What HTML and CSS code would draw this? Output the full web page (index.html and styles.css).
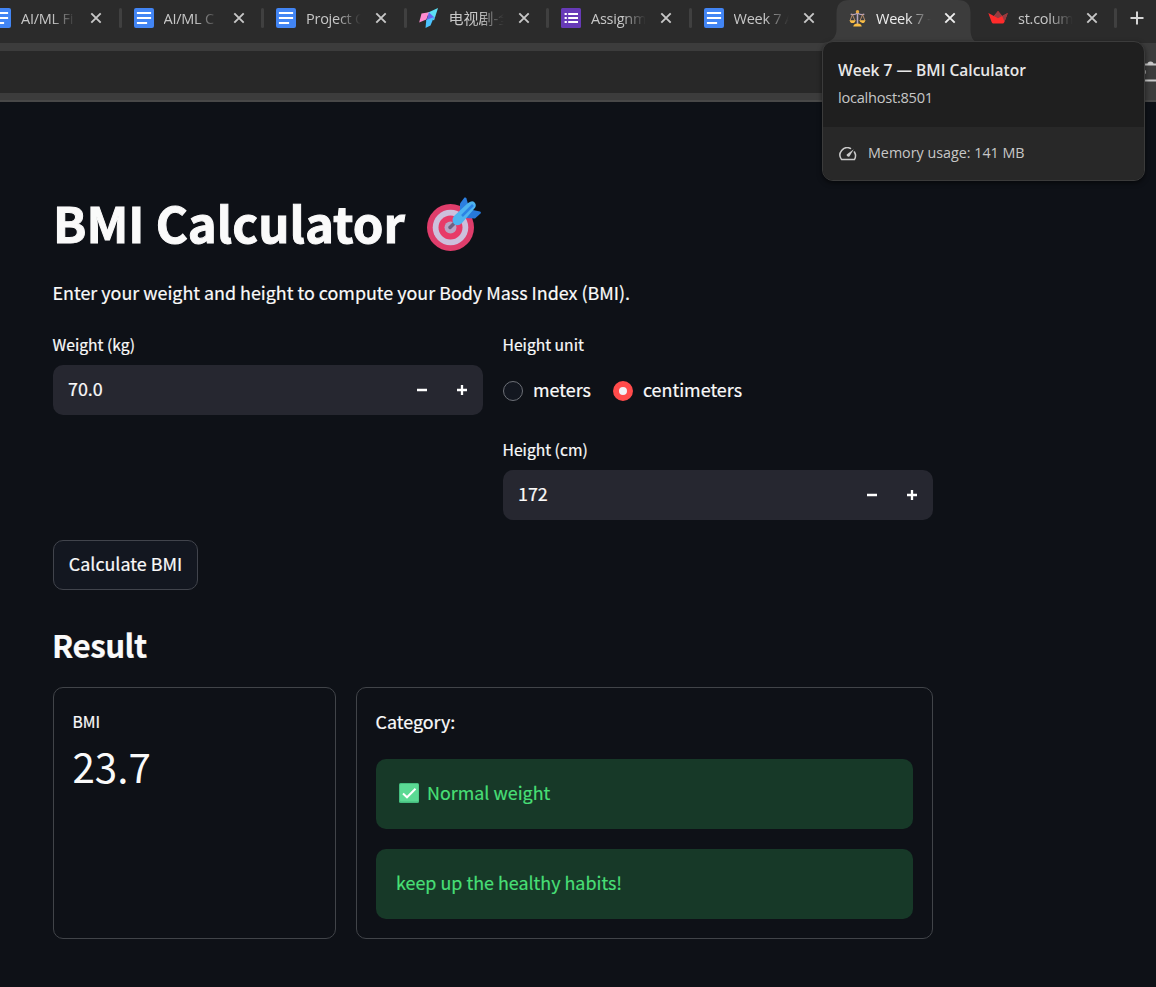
FILE: index.html
```
<!DOCTYPE html>
<html lang="en">
<head>
<meta charset="utf-8">
<title>Week 7 — BMI Calculator</title>
<link rel="stylesheet" href="styles.css">
</head>
<body>
<svg class="defs" width="0" height="0">
  <symbol id="doc" viewBox="0 0 20 20"><rect width="20" height="20" rx="2" fill="#4285f4"/><path d="M4 5h12M4 10h12M4 15h8" stroke="#fff" stroke-width="2.2" stroke-linecap="square"/></symbol>
  <symbol id="close" viewBox="0 0 12 12"><path d="M1.3 1.3l9.4 9.4M10.7 1.3L1.3 10.7" stroke="currentColor" stroke-width="1.9" fill="none"/></symbol>
</svg>
<header class="browser">
  <nav class="tabs">
    <div class="tab"><svg class="fav"><use href="#doc"/></svg><span class="title">AI/ML Fi</span><svg class="close"><use href="#close"/></svg></div>
    <div class="tab"><svg class="fav"><use href="#doc"/></svg><span class="title">AI/ML C</span><svg class="close"><use href="#close"/></svg></div>
    <div class="tab"><svg class="fav"><use href="#doc"/></svg><span class="title">Project C</span><svg class="close"><use href="#close"/></svg></div>
    <div class="tab"><svg class="fav" viewBox="0 0 20 20"><path d="M19 0L7 5.5l8 7z" fill="#5ce1f5"/><path d="M2.5 5.5L10 4.2l-2.7 7.3L.2 14.5z" fill="#ff8bd0"/><path d="M10 4.5l6 5.5-8.8 3z" fill="#6866ec"/><path d="M7.3 12L15 9l-3.5 8.5L6.5 20z" fill="#4cc4ff"/></svg><span class="title cjk">电视剧-全</span><svg class="close"><use href="#close"/></svg></div>
    <div class="tab"><svg class="fav" viewBox="0 0 20 20"><rect width="20" height="20" rx="1.5" fill="#673ab7"/><path d="M7.2 6H17M7.2 10H17M7.2 14H17M3.6 6h2.2M3.6 10h2.2M3.6 14h2.2" stroke="#fff" stroke-width="2.2"/></svg><span class="title">Assignm</span><svg class="close"><use href="#close"/></svg></div>
    <div class="tab nosep"><svg class="fav"><use href="#doc"/></svg><span class="title">Week 7 A</span><svg class="close"><use href="#close"/></svg></div>
    <div class="tab active nosep">
      <svg class="shape" viewBox="0 0 158 43"><path d="M0 43Q13.500 41 13.500 29V13Q13.500 0 26.500 0H134.500Q147.500 0 147.500 13V29Q147.500 43 158 43z" fill="#3c3c3c"/></svg>
      <svg class="fav scales" viewBox="0 0 20 20"><path d="M9.100 2h1.800v15H9.100z" fill="#b5a6bf"/><path d="M2 5.500Q6 7 10 4Q14 7 18 5.500" stroke="#b9a4bd" stroke-width="1.500" fill="none"/><path d="M4 6L1.300 13M4 6l3 7M16 6l-3 7M16 6l2.700 7" stroke="#ca9970" stroke-width="1"/><circle cx="10" cy="2.500" r="2" fill="#e5a640"/><path d="M.7 12.500h7.100Q7 16 4.200 16T.7 12.500zM12.200 12.500h7.100Q18.500 16 15.800 16t-3.600-3.500zM5 20Q5.500 16.500 10 16.500t5 3.500z" fill="#f9bd45"/></svg>
      <span class="title">Week 7 —</span><svg class="close"><use href="#close"/></svg></div>
    <div class="tab last"><svg class="fav" viewBox="0 0 20 20"><path d="M.3 5l5.600 3L10 3l4.200 5L19.800 5l-3.500 9.300q-.5 1.200-1.700 1.200H5.400q-1.200 0-1.700-1.200z" fill="#ff2b2b"/><path d="M10 3l4.200 5L10 10.200 5.900 8zM14.200 8l5.600-3-3.300 8.800z" fill="#943c41"/></svg><span class="title">st.colum</span><svg class="close"><use href="#close"/></svg></div>
    <svg class="new" viewBox="0 0 14 14"><path d="M7 .5v13M.5 7h13" stroke="#d5d5d5" stroke-width="2"/></svg>
  </nav>
  <div class="toolbar"><div class="address"></div><svg class="tool" viewBox="0 0 12 22"><path d="M0 3.500h12M0 19.500h12" stroke="#c7c7c7" stroke-width="2"/><path d="M3.500 3a3 2.500 0 016 0z" fill="#c7c7c7"/><path d="M0 8a4 4 0 010 6" fill="none" stroke="#c7c7c7"/></svg></div>
</header>
<aside class="hovercard">
  <div class="card-info"><div class="card-title">Week 7 — BMI Calculator</div><div class="card-url">localhost:8501</div></div>
  <div class="card-memory"><svg viewBox="0 0 18 14"><path d="M11.500 1.500A7.300 7.300 0 002.600 12.600h12.800A7.300 7.300 0 0015.400 5" fill="none" stroke="#c9c9c9" stroke-width="1.500" stroke-linecap="round" stroke-linejoin="round"/><path d="M14.800 2.300L10.400 9.400A1.800 1.800 0 017.700 7.400z" fill="#c9c9c9"/></svg><span>Memory usage: 141 MB</span></div>
</aside>
<main class="app">
  <h1><span>BMI Calculator</span><svg class="target" viewBox="0 0 54 54"><circle cx="23.500" cy="30.500" r="23.500" fill="#df3d6b"/><circle cx="23.500" cy="30.500" r="17.800" fill="#cdbfdc"/><circle cx="23.500" cy="30.500" r="12" fill="#e83a68"/><circle cx="23.500" cy="30.500" r="6" fill="#b9a4c4"/><path d="M23 30.500l6-6" stroke="#716080" stroke-width="3.500" stroke-linecap="round"/><path d="M33 15L33 6.500 37.500 .5Q39 0 39.500 1.500L42 11z" fill="#2c7fe0"/><path d="M41 12l12 2.500q1.500.5.500 2L48 21.500l-10-.5z" fill="#2778da"/><path d="M27 19L41 6q5-3.500 7 0 2 3-1 6L35 26q-4 4-8 1-3-4 0-8z" fill="#4eb4f0"/><path d="M35 19L46 8" stroke="#2c83e4" stroke-width="2.500"/></svg></h1>
  <p class="intro">Enter your weight and height to compute your Body Mass Index (BMI).</p>
  <section class="form">
    <div class="field"><label>Weight (kg)</label><div class="number"><span class="value">70.0</span><svg class="step" viewBox="0 0 10 10"><path d="M0 5h10" stroke="#fff" stroke-width="2.500"/></svg><svg class="step" viewBox="0 0 10 10"><path d="M0 5h10M5 0v10" stroke="#fff" stroke-width="2.300"/></svg></div></div>
    <div class="field"><label>Height unit</label>
      <div class="radios"><span class="radio"></span><span class="option meters">meters</span><span class="radio on"></span><span class="option">centimeters</span></div>
      <label>Height (cm)</label><div class="number"><span class="value">172</span><svg class="step" viewBox="0 0 10 10"><path d="M0 5h10" stroke="#fff" stroke-width="2.500"/></svg><svg class="step" viewBox="0 0 10 10"><path d="M0 5h10M5 0v10" stroke="#fff" stroke-width="2.300"/></svg></div></div>
  </section>
  <button class="calculate">Calculate BMI</button>
  <h2>Result</h2>
  <section class="results">
    <div class="panel"><div class="metric-label">BMI</div><div class="metric">23.7</div></div>
    <div class="panel"><div class="category">Category:</div>
      <div class="alert first"><svg class="check" viewBox="0 0 20 20"><rect width="20" height="20" rx="1.500" fill="#45bd7f"/><rect x="1" y="1" width="18.500" height="17.500" rx="1" fill="#5bd994"/><path d="M4 10.500l4 3.800 8.500-8.600" fill="none" stroke="#fff" stroke-width="2"/></svg><span>Normal weight</span></div>
      <div class="alert"><span>keep up the healthy habits!</span></div></div>
  </section>
</main>
</body>
</html>
```
FILE: styles.css
```
* { box-sizing: border-box; }
body { margin: 0; width: 1156px; height: 987px; overflow: hidden; background: #0e1117; color: #fafafa; font-family: "Noto Sans CJK SC", sans-serif; font-size: 17.9px; }
svg { display: block; flex: none; }
.defs { position: absolute; }
.browser { font-family: "Open Sans", "Noto Sans CJK SC", sans-serif; height: 102px; }
.tabs { display: flex; height: 43px; background: #2b2b2b; margin-left: -24px; width: 1180px; }
.tab { position: relative; flex: none; width: 142.5px; height: 36px; padding-left: 15px; display: flex; align-items: center; color: #c7c7c7; }
.tab::after { content: ""; position: absolute; right: -3px; top: 8px; width: 3px; height: 20px; border-radius: 2px; background: #404040; }
.tab.nosep::after { display: none; }
.fav { width: 20px; height: 20px; position: relative; }
.fav.scales { width: 17px; height: 18px; margin: 0 0 0 3px; }
.title { position: relative; margin: 1px 0 0 10px; width: 56px; overflow: hidden; white-space: nowrap; font-size: 14.5px; line-height: 22px; letter-spacing: -.25px; -webkit-mask-image: linear-gradient(90deg, #000 55%, transparent 98%); mask-image: linear-gradient(90deg, #000 55%, transparent 98%); }
.cjk { font-size: 15px; letter-spacing: 0; margin-top: 0; }
.close { position: relative; width: 12px; height: 12px; margin-left: 13px; }
.tab.active { color: #eee; }
.tab.active .close { margin-left: 12px; }
.last { margin-left: -.5px; }
.last .close { margin-left: 11.5px; }
.shape { position: absolute; left: -8px; top: 0; width: 158px; height: 43px; }
.new { width: 14px; height: 14px; margin: 11px 0 0 14.5px; }
.last::after { right: -1px !important; }
.toolbar { display: flex; height: 59px; background: #3c3c3c; border-bottom: 2px solid #484848; padding-top: 8px; }
.address { width: 1140px; height: 42px; background: #282828; }
.tool { width: 12px; height: 22px; margin: 10px 0 0 4px; }
.hovercard { position: absolute; left: 822px; top: 41px; width: 323px; height: 140px; border: 1px solid #3b3b3b; border-radius: 11px; overflow: hidden; background: #1f1f1f; font-family: "Open Sans", sans-serif; font-size: 14.3px; box-shadow: 0 2px 5px #0008; }
.card-info { height: 85px; padding: 16px 15px; }
.card-title { font-weight: 600; font-size: 15.55px; line-height: 24px; color: #e8e8e8; white-space: nowrap; }
.card-url { font-size: 14.6px; line-height: 22px; margin-top: 4px; color: #c7c7c7; letter-spacing: -.25px; }
.card-memory { height: 54px; display: flex; align-items: center; padding-left: 16px; gap: 11px; background: #282828; color: #c7c7c7; }
.card-memory span { padding-bottom: 3px; }
.card-memory svg { width: 18px; height: 14px; }
.app { width: 933px; padding: 91px 0 0 53px; -webkit-text-stroke: .2px currentColor; }
h1 { display: flex; margin: 0; height: 66px; line-height: 58px; font-size: 49.1px; font-weight: 700; white-space: nowrap; -webkit-text-stroke: 1px currentColor; }
.target { width: 54px; height: 54px; margin: 4px 0 0 22px; }
.intro { margin: 17px 0 0; line-height: 32px; white-space: nowrap; text-indent: -.5px; }
.form { display: flex; gap: 20px; margin-top: 22px; height: 190px; }
.field { width: 430px; }
label { display: block; height: 30px; line-height: 30px; margin-bottom: 5px; font-size: 15.66px; text-indent: -.5px; }
.number { height: 50px; border-radius: 10px; background: #262730; display: flex; align-items: center; padding: 0 16px 0 15px; }
.value { flex: 1; padding-bottom: 4px; }
.step { width: 10px; height: 10px; }
.step + .step { margin-left: 30px; }
.radios { display: flex; align-items: center; height: 52px; margin-bottom: 18px; }
.option { padding-bottom: 4px; }
.radio { width: 20px; height: 20px; border: 1px solid #6c6f76; border-radius: 50%; background: #131720; margin-right: 10px; }
.radio.on { border: 6px solid #ff4b4b; background: #f0f2f6; }
.meters { margin-right: 22px; }
.calculate { display: block; margin-top: 20px; width: 145px; height: 50px; padding: 0 0 4px; border: 1px solid #41444c; border-radius: 10px; background: #131720; color: #fafafa; font: inherit; white-space: nowrap; }
h2 { margin: 32px 0 19px -1px; height: 46px; line-height: 46px; font-size: 31.3px; font-weight: 600; letter-spacing: -.5px; }
.results { display: flex; gap: 20px; }
.panel { width: 283px; height: 252px; border: 1px solid #414449; border-radius: 10px; padding: 19px; }
.panel + .panel { width: 577px; }
.metric-label { height: 30px; line-height: 30px; font-size: 15.66px; text-indent: -.5px; }
.metric { height: 60px; line-height: 57px; font-size: 40.3px; text-indent: -.5px; -webkit-text-stroke: 0; }
.category { height: 32px; line-height: 29px; margin-bottom: 20px; text-indent: -.5px; }
.alert { height: 70px; border-radius: 10px; background: #173928; color: #48df76; display: flex; align-items: center; padding-left: 20px; }
.alert span { padding-bottom: 4px; }
.alert.first { margin-bottom: 20px; }
.check { width: 20px; height: 20px; margin: -3px 8px 0 3px; }
```
